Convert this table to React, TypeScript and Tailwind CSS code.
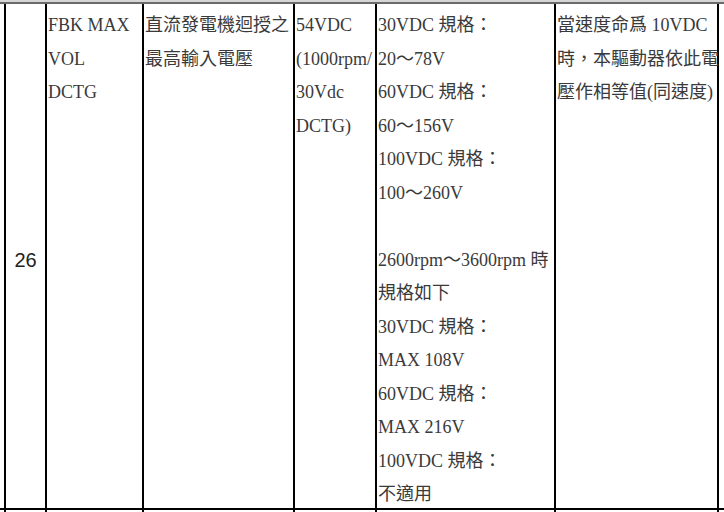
const serif = "font-['Liberation_Serif','Noto_Sans_CJK_TC',serif]"

function Cell({ w, lines, last }: { w: string; lines: string[]; last?: boolean }) {
  return (
    <div className={`${w} shrink-0 border-l-2 border-black pl-px pt-[5px] ${last ? "border-r-2" : ""}`}>
      {lines.map((l, i) => (
        <div key={i} className="h-[33.5px] whitespace-nowrap leading-[33.5px]">
          {l}
        </div>
      ))}
    </div>
  )
}

const spec = [
  "30VDC 規格：",
  "20～78V",
  "60VDC 規格：",
  "60～156V",
  "100VDC 規格：",
  "100～260V",
  "",
  "2600rpm～3600rpm 時",
  "規格如下",
  "30VDC 規格：",
  "MAX 108V",
  "60VDC 規格：",
  "MAX 216V",
  "100VDC 規格：",
  "不適用",
]

export default function App() {
  return (
    <div className={`h-[512px] w-[724px] overflow-hidden bg-white text-[18px] text-[#3a3a3a] ${serif}`}>
      <div className="h-[2px] bg-[#d6d6d6]" />
      <div className="h-[2px] bg-[#6a6a6a]" />
      <div className="flex h-[506px] border-b-2 border-black pl-[4px]">
        <div className="flex w-[41px] shrink-0 items-center justify-center border-l-2 border-black pt-[8px] font-['Liberation_Sans',sans-serif] text-[20px] text-[#222]">
          26
        </div>
        <Cell w="w-[97px]" lines={["FBK MAX", "VOL", "DCTG"]} />
        <Cell w="w-[151px]" lines={["直流發電機迴授之", "最高輸入電壓"]} />
        <Cell w="w-[82px]" lines={["54VDC", "(1000rpm/", "30Vdc", "DCTG)"]} />
        <Cell w="w-[179px]" lines={spec} />
        <Cell w="w-[165px]" lines={["當速度命爲 10VDC", "時，本驅動器依此電", "壓作相等值(同速度)"]} last />
      </div>
      <div className="flex h-[10px] pl-[4px]">
        <div className="w-[41px] border-l-2 border-black" />
        <div className="w-[97px] border-l-2 border-black" />
        <div className="w-[151px] border-l-2 border-black" />
        <div className="w-[82px] border-l-2 border-black" />
        <div className="w-[179px] border-l-2 border-black" />
        <div className="w-[165px] border-x-2 border-black" />
      </div>
    </div>
  )
}
